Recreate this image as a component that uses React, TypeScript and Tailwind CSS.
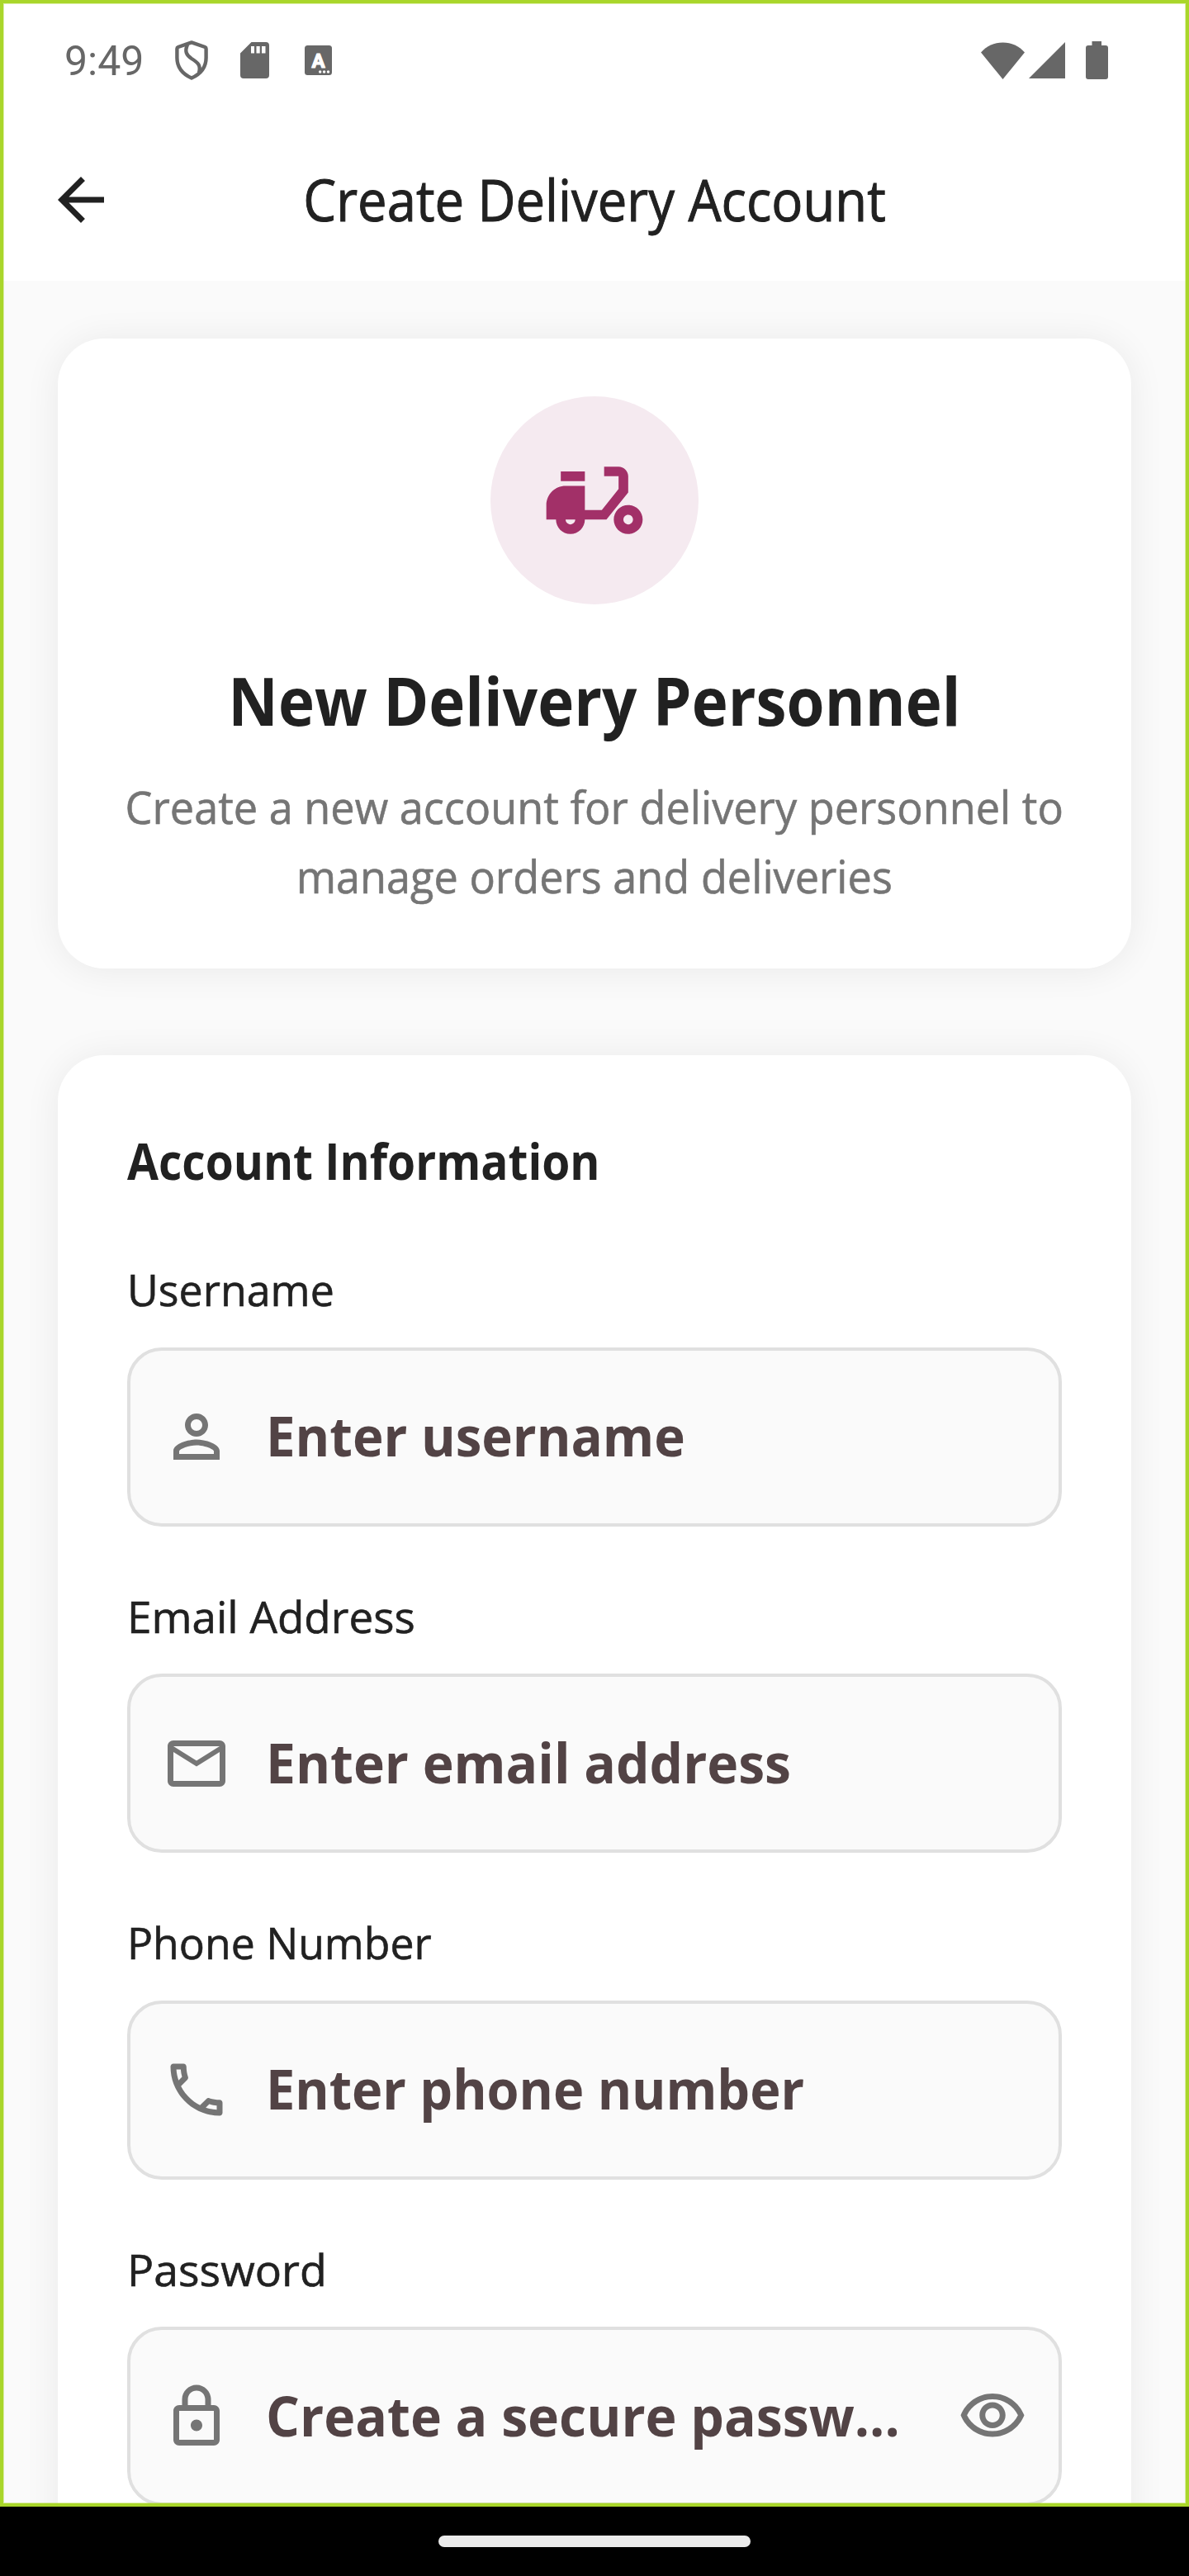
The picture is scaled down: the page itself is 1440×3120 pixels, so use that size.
import type { ReactNode } from "react";

const ICONS = {
  back: "M20 11H7.83l5.59-5.59L12 4l-8 8 8 8 1.41-1.41L7.83 13H20v-2z",
  scooter:
    "M19 7c0-1.1-.9-2-2-2h-3v2h3v2.65L13.52 14H10V9H6c-2.21 0-4 1.79-4 4v3h2c0 1.66 1.34 3 3 3s3-1.34 3-3h4.48L19 10.35V7zM7 17c-.55 0-1-.45-1-1h2c0 .55-.45 1-1 1zM5 6h5v2H5V6zM19 13c-1.66 0-3 1.34-3 3s1.34 3 3 3 3-1.34 3-3-1.34-3-3-3zm0 4c-.55 0-1-.45-1-1s.45-1 1-1 1 .45 1 1-.45 1-1 1z",
  person:
    "M12 6c1.1 0 2 .9 2 2s-.9 2-2 2-2-.9-2-2 .9-2 2-2m0 9c2.7 0 5.8 1.29 6 2v1H6v-.99c.2-.72 3.3-2.01 6-2.01m0-11C9.79 4 8 5.79 8 8s1.79 4 4 4 4-1.79 4-4-1.79-4-4-4zm0 9c-2.67 0-8 1.34-8 4v3h16v-3c0-2.66-5.33-4-8-4z",
  mail: "M22 6c0-1.1-.9-2-2-2H4c-1.1 0-2 .9-2 2v12c0 1.1.9 2 2 2h16c1.1 0 2-.9 2-2V6zm-2 0l-8 5-8-5h16zm0 12H4V8l8 5 8-5v10z",
  phone:
    "M6.54 5c.06.89.21 1.76.45 2.59l-1.2 1.2c-.41-1.2-.67-2.47-.76-3.79h1.51m9.86 12.02c.85.24 1.72.39 2.6.45v1.49c-1.32-.09-2.59-.35-3.8-.75l1.2-1.19M7.5 3H4c-.55 0-1 .45-1 1 0 9.39 7.61 17 17 17 .55 0 1-.45 1-1v-3.49c0-.55-.45-1-1-1-1.24 0-2.45-.2-3.57-.57-.1-.04-.21-.05-.31-.05-.26 0-.51.1-.71.29l-2.2 2.2c-2.83-1.45-5.15-3.76-6.59-6.59l2.2-2.2c.28-.28.36-.67.25-1.02C8.7 6.45 8.5 5.25 8.5 4c0-.55-.45-1-1-1z",
  lock: "M18 8h-1V6c0-2.76-2.24-5-5-5S7 3.24 7 6v2H6c-1.1 0-2 .9-2 2v10c0 1.1.9 2 2 2h12c1.1 0 2-.9 2-2V10c0-1.1-.9-2-2-2zM9 6c0-1.66 1.34-3 3-3s3 1.34 3 3v2H9V6zm9 14H6V10h12v10zm-6-3c1.1 0 2-.9 2-2s-.9-2-2-2-2 .9-2 2 .9 2 2 2z",
  eye: "M12 6c3.79 0 7.17 2.13 8.82 5.5C19.17 14.87 15.79 17 12 17s-7.17-2.13-8.82-5.5C4.83 8.13 8.21 6 12 6m0-2C7 4 2.73 7.11 1 11.5 2.73 15.89 7 19 12 19s9.27-3.11 11-7.5C21.27 7.11 17 4 12 4zm0 5c1.38 0 2.5 1.12 2.5 2.5S13.38 14 12 14s-2.5-1.12-2.5-2.5S10.62 9 12 9m0-2c-2.48 0-4.5 2.02-4.5 4.5S9.52 16 12 16s4.5-2.02 4.5-4.5S14.48 7 12 7z",
};

type IconName = keyof typeof ICONS;

function Icon({ name, className }: { name: IconName; className: string }) {
  return (
    <svg viewBox="0 0 24 24" fill="currentColor" className={`shrink-0 ${className}`}>
      <path d={ICONS[name]} />
    </svg>
  );
}

function StatusBar() {
  return (
    <div className="flex h-[146px] items-center justify-between pl-[78px] pr-[98px] font-[Roboto,sans-serif] text-[#676767]">
      <div className="flex items-center">
        <span className="w-[134px] pt-0.5 text-[50px] leading-none">9:49</span>
        <svg viewBox="0 0 40 48" className="h-12 w-10" fill="none" stroke="currentColor" strokeWidth="4.4" strokeLinejoin="round">
          <path d="M20 2.4 L36.3 8 Q37.6 8.5 37.6 10 V21 C37.6 33 30 41 20 45.6 C10 41 2.4 33 2.4 21 V10 Q2.4 8.5 3.7 8 Z" />
          <path d="M15 5 C11.5 13 13.5 17.5 20 22 C28 27 31.5 30.5 29 39" />
        </svg>
        <svg viewBox="0 0 35 44" className="ml-[39px] h-11 w-[35px]" fill="currentColor">
          <path
            fillRule="evenodd"
            d="M13.5 0H31a4 4 0 0 1 4 4V40a4 4 0 0 1-4 4H4a4 4 0 0 1-4-4V13.5ZM13 5V13.5h4V5ZM19.5 5V13.5h4.200V5ZM26 5V13.5h4.500V5Z"
          />
        </svg>
        <svg viewBox="0 0 33 36" className="ml-[43px] h-9 w-[33px]">
          <rect width="33" height="36" rx="3.500" fill="currentColor" />
          <text x="16.500" y="26.500" textAnchor="middle" fill="#fff" stroke="#fff" strokeWidth="1.2" strokeLinejoin="round" className="text-[24px] font-bold">
            A
          </text>
          <circle cx="18.700" cy="32" r="1.700" fill="#fff" />
          <circle cx="23.600" cy="32" r="1.700" fill="#fff" />
          <circle cx="28.500" cy="32" r="1.700" fill="#fff" />
        </svg>
      </div>
      <div className="flex items-center">
        <svg viewBox="0 0 53 45" className="h-[45px] w-[53px]" fill="currentColor">
          <path d="M26.500 45 L0 12.500 C7 4.500 16 0.500 26.500 0.500 C37 0.500 46 4.500 53 12.500 Z" />
        </svg>
        <svg viewBox="0 0 44 44" className="ml-[5px] size-11" fill="currentColor">
          <path d="M44 0V44H0Z" />
        </svg>
        <svg viewBox="0 0 27 46" className="ml-[25px] h-[46px] w-[27px]" fill="currentColor">
          <path d="M7.500 0H19V5H24a3 3 0 0 1 3 3V43a3 3 0 0 1-3 3H3a3 3 0 0 1-3-3V8a3 3 0 0 1 3-3H7.500Z" />
        </svg>
      </div>
    </div>
  );
}

function Card({ className, children }: { className: string; children: ReactNode }) {
  return (
    <section className={`mx-[70px] shrink-0 rounded-[56px] bg-white shadow-[0_2px_44px_rgba(0,0,0,0.07)] ${className}`}>
      {children}
    </section>
  );
}

type FieldProps = {
  label: string;
  labelClass: string;
  placeholder: string;
  placeholderClass: string;
  icon: IconName;
  trailing?: IconName;
};

function Field({ label, labelClass, placeholder, placeholderClass, icon, trailing }: FieldProps) {
  return (
    <div className="flex flex-col gap-[33.5px]">
      <div
        className={`h-[73px] origin-left text-[53.9px] leading-[73px] text-[#212121] [-webkit-text-stroke:0.6px] ${labelClass}`}
      >
        {label}
      </div>
      <div className="flex h-[217px] items-center rounded-[42px] border-4 border-[#e0e0e0] bg-[#fafafa] px-[38px] text-[#757575]">
        <Icon name={icon} className="size-[84px]" />
        <span
          className={`ml-[42px] min-w-0 flex-1 origin-left whitespace-nowrap pb-0.5 text-[67.2px] font-bold leading-none text-[#524345] ${placeholderClass}`}
        >
          {placeholder}
        </span>
        {trailing && <Icon name={trailing} className="size-[84px]" />}
      </div>
    </div>
  );
}

const FIELDS: FieldProps[] = [
  {
    label: "Username",
    labelClass: "scale-x-[0.963]",
    placeholder: "Enter username",
    placeholderClass: "scale-x-[0.946]",
    icon: "person",
  },
  {
    label: "Email Address",
    labelClass: "scale-x-[0.983]",
    placeholder: "Enter email address",
    placeholderClass: "scale-x-[0.955]",
    icon: "mail",
  },
  {
    label: "Phone Number",
    labelClass: "scale-x-[0.96]",
    placeholder: "Enter phone number",
    placeholderClass: "scale-x-[0.938]",
    icon: "phone",
  },
  {
    label: "Password",
    labelClass: "scale-x-[0.995]",
    placeholder: "Create a secure passw...",
    placeholderClass: "scale-x-[0.957]",
    icon: "lock",
    trailing: "eye",
  },
];

export default function App() {
  return (
    <div className="flex h-[3120px] w-[1440px] flex-col overflow-hidden bg-black font-['Open_Sans',sans-serif]">
      <div className="relative flex h-[3036px] flex-col overflow-hidden bg-[#fafafa]">
        <div className="h-[340px] shrink-0 bg-white">
          <StatusBar />
          <header className="grid h-[192px] grid-cols-[84px_1fr_84px] items-center px-14 text-[#212121]">
            <Icon name="back" className="size-[84px]" />
            <h1 className="scale-x-[0.924] whitespace-nowrap pt-px text-center text-[68.6px] font-normal leading-none [-webkit-text-stroke:1px]">
              Create Delivery Account
            </h1>
          </header>
        </div>

        <Card className="mt-[70px] flex h-[763px] flex-col items-center pt-[70px]">
          <div className="flex size-[252px] items-center justify-center rounded-full bg-[#f5eaf0] text-[#a23068]">
            <Icon name="scooter" className="size-[140px]" />
          </div>
          <h2 className="mt-[68px] h-24 scale-x-[0.934] whitespace-nowrap text-[79.8px] font-bold leading-[96px] text-[#212121]">
            New Delivery Personnel
          </h2>
          <p className="mt-[39px] scale-x-[0.957] whitespace-nowrap text-center text-[54.6px] leading-[84px] text-[#757575] [-webkit-text-stroke:0.6px]">
            Create a new account for delivery personnel to
            <br />
            manage orders and deliveries
          </p>
        </Card>

        <Card className="mt-[105px] h-[1900px] px-[84px] pt-[84px]">
          <h3 className="h-[88px] origin-left scale-x-[0.915] text-[60.2px] font-bold leading-[88px] text-[#212121]">
            Account Information
          </h3>
          <div className="mt-[75px] flex flex-col gap-[72px]">
            {FIELDS.map((field) => (
              <Field key={field.label} {...field} />
            ))}
          </div>
        </Card>

        <div className="pointer-events-none absolute inset-0 border-4 border-[#a9d62b] shadow-[inset_0_0_0_1px_rgba(169,214,43,0.4)]" />
      </div>

      <div className="flex h-[84px] items-center justify-center">
        <div className="h-3.5 w-[378px] rounded-full bg-[#ebebeb]" />
      </div>
    </div>
  );
}
